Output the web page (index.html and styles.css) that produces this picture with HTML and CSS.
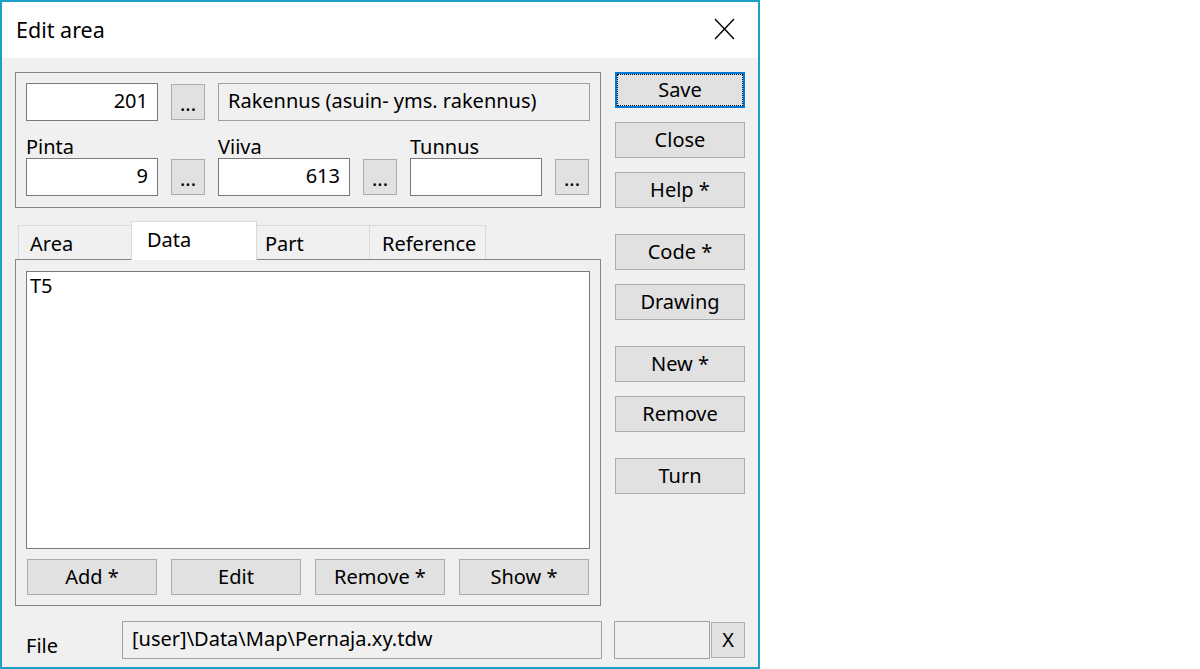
FILE: index.html
```html
<!DOCTYPE html>
<html lang="en">
<head>
    <meta charset="UTF-8">
    <meta name="viewport" content="width=device-width, initial-scale=1.0">
    <title>Edit area</title>
    <link rel="stylesheet" href="styles.css">
</head>
<body>
    <div class="dialog">
        <div class="titlebar">
            <span class="title">Edit area</span>
            <svg class="close-x" width="21" height="22" viewBox="0 0 21 22">
                <path d="M1 1 L20 21 M20 1 L1 21" stroke="#000" stroke-width="1.4" fill="none"/>
            </svg>
        </div>

        <div class="content">
            <div class="top">
                <div class="left">
                    <div class="group">
                        <div class="group-row">
                            <div class="field num">201</div>
                            <div class="btn dots">...</div>
                            <div class="field readonly wide">Rakennus (asuin- yms. rakennus)</div>
                        </div>
                        <div class="group-row second">
                            <div class="cell">
                                <div class="label">Pinta</div>
                                <div class="field num">9</div>
                            </div>
                            <div class="btn dots low">...</div>
                            <div class="cell">
                                <div class="label">Viiva</div>
                                <div class="field num">613</div>
                            </div>
                            <div class="btn dots low">...</div>
                            <div class="cell">
                                <div class="label">Tunnus</div>
                                <div class="field num"></div>
                            </div>
                            <div class="btn dots low">...</div>
                        </div>
                    </div>

                    <div class="tabs">
                        <div class="tab tab-area">Area</div>
                        <div class="tab tab-data selected">Data</div>
                        <div class="tab tab-part">Part</div>
                        <div class="tab tab-ref">Reference</div>
                    </div>
                    <div class="panel">
                        <div class="memo">T5</div>
                        <div class="panel-buttons">
                            <div class="btn">Add *</div>
                            <div class="btn">Edit</div>
                            <div class="btn">Remove *</div>
                            <div class="btn">Show *</div>
                        </div>
                    </div>
                </div>

                <div class="side">
                    <div class="btn focused">Save</div>
                    <div class="btn">Close</div>
                    <div class="btn">Help *</div>
                    <div class="btn spaced">Code *</div>
                    <div class="btn">Drawing</div>
                    <div class="btn spaced">New *</div>
                    <div class="btn">Remove</div>
                    <div class="btn spaced">Turn</div>
                </div>
            </div>

            <div class="file-row">
                <div class="file-label">File</div>
                <div class="field readonly file-path">[user]\Data\Map\Pernaja.xy.tdw</div>
                <div class="field readonly file-extra"></div>
                <div class="btn small-x">X</div>
            </div>
        </div>
    </div>
</body>
</html>
```

FILE: styles.css
```css
body {
    margin: 0;
    background: white;
    font-family: "Noto Sans", "Open Sans", sans-serif;
    font-size: 20px;
    color: #000;
}

.dialog {
    width: 756px;
    height: 665px;
    border: 2px solid #1ba1c6;
    background: #f0f0f0;
    display: flex;
    flex-direction: column;
}

.titlebar {
    height: 56px;
    background: white;
    display: flex;
    align-items: center;
    justify-content: space-between;
    padding: 0 23px 0 14px;
}

.title {
    font-size: 21.5px;
    margin-top: -1px;
}

.close-x {
    display: block;
    margin-top: -2px;
}

.content {
    padding: 14px 13px 0 13px;
    display: flex;
    flex-direction: column;
}

.top {
    display: flex;
    gap: 14px;
}

.left {
    width: 586px;
    display: flex;
    flex-direction: column;
}

/* generic controls */
.field {
    box-sizing: border-box;
    height: 38px;
    border: 1px solid #7a7a7a;
    background: white;
    padding: 0 9px;
    line-height: 33px;
    white-space: nowrap;
    overflow: hidden;
}

.field.num {
    width: 132px;
    text-align: right;
}

.field.readonly {
    background: #f0f0f0;
    border-color: #a0a0a0;
}

.btn {
    box-sizing: border-box;
    width: 130px;
    height: 36px;
    border: 1px solid #adadad;
    background: #e1e1e1;
    text-align: center;
    line-height: 33px;
    white-space: nowrap;
}

.btn.dots {
    width: 34px;
    line-height: 38px;
}

.btn.focused {
    border: 2px solid #0078d7;
    outline: 1px dotted #000;
    outline-offset: -3px;
    line-height: 31px;
}

/* top group box */
.group {
    box-sizing: border-box;
    height: 136px;
    border: 1px solid #858585;
    padding: 10px 10px 0 10px;
}

.group-row {
    display: flex;
    align-items: center;
    gap: 13px;
}

.group-row.second {
    align-items: flex-end;
    margin-top: 15px;
}

.field.wide {
    flex: 1;
}

.label {
    line-height: 22px;
    height: 22px;
}

.btn.low {
    margin-bottom: 1px;
}

/* tabs */
.tabs {
    display: flex;
    align-items: flex-end;
    height: 38px;
    margin-top: 13px;
    padding-left: 3px;
}

.tab {
    box-sizing: border-box;
    height: 34px;
    border: 1px solid #d9d9d9;
    border-bottom: none;
    margin-left: -1px;
    background: #f0f0f0;
    line-height: 36px;
}

.tab-area { width: 114px; padding-left: 11px; margin-left: 0; }
.tab-data { width: 126px; padding-left: 15px; }
.tab-part { width: 114px; padding-left: 8px; }
.tab-ref { width: 117px; padding-left: 12px; }

.tab.selected {
    height: 39px;
    margin-bottom: -1px;
    background: white;
    position: relative;
    z-index: 1;
    line-height: 36px;
}

.panel {
    box-sizing: border-box;
    height: 347px;
    border: 1px solid #858585;
    padding: 11px 10px 0 10px;
}

.memo {
    box-sizing: border-box;
    height: 278px;
    border: 1px solid #7a7a7a;
    background: white;
    padding: 2px 3px;
    line-height: 24px;
}

.panel-buttons {
    display: flex;
    gap: 14px;
    margin: 10px 0 0 1px;
}

/* right hand buttons */
.side {
    width: 130px;
    display: flex;
    flex-direction: column;
    gap: 14px;
}

.side .btn.spaced {
    margin-top: 12px;
}

/* file row */
.file-row {
    display: flex;
    margin-top: 15px;
    align-items: center;
}

.file-label {
    width: 96px;
    padding-left: 11px;
    align-self: flex-end;
    line-height: 22px;
    margin-bottom: 2px;
}

.file-path {
    width: 480px;
}

.file-extra {
    width: 96px;
    margin-left: 12px;
    padding: 0;
}

.btn.small-x {
    width: 34px;
    margin-left: 1px;
}
```
